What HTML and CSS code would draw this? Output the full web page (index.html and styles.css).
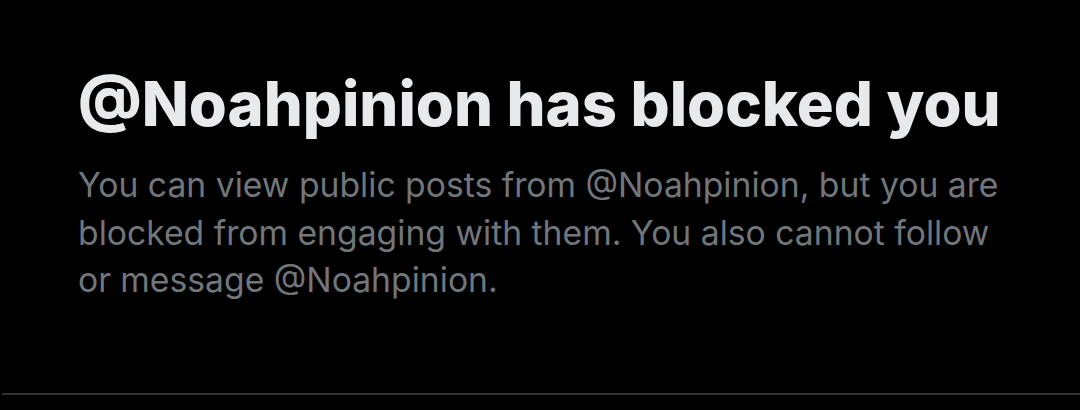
FILE: index.html
```html
<!DOCTYPE html>
<html>
<head>
<meta charset="utf-8">
<link rel="stylesheet" href="styles.css">
</head>
<body>
<main class="page">
  <section class="notice">
    <h1 class="title">@Noahpinion has blocked you</h1>
    <p class="desc">You can view public posts from @Noahpinion, but you are blocked from engaging with them. You also cannot follow or message @Noahpinion.</p>
  </section>
  <div class="divider"></div>
</main>
</body>
</html>
```
FILE: styles.css
```css
html, body {
  margin: 0;
  padding: 0;
  background: #000;
  height: 100%;
}
.page {
  width: 1080px;
  height: 410px;
  display: flex;
  flex-direction: column;
  overflow: hidden;
}
.notice {
  padding: 66px 60px 0 78px;
  flex: 1;
}
.title {
  margin: 0;
  font-family: "Inter", sans-serif;
  font-weight: 800;
  font-size: 61.5px;
  line-height: 76px;
  color: #e7e9ea;
  letter-spacing: 0;
}
.desc {
  margin: 19px 0 0 0;
  font-family: "Inter", sans-serif;
  font-size: 33.7px;
  line-height: 47.5px;
  color: #71767b;
  max-width: 940px;
}
.divider {
  height: 2px;
  margin: 0 0 15px 2px;
  background: #2f3336;
}
```
